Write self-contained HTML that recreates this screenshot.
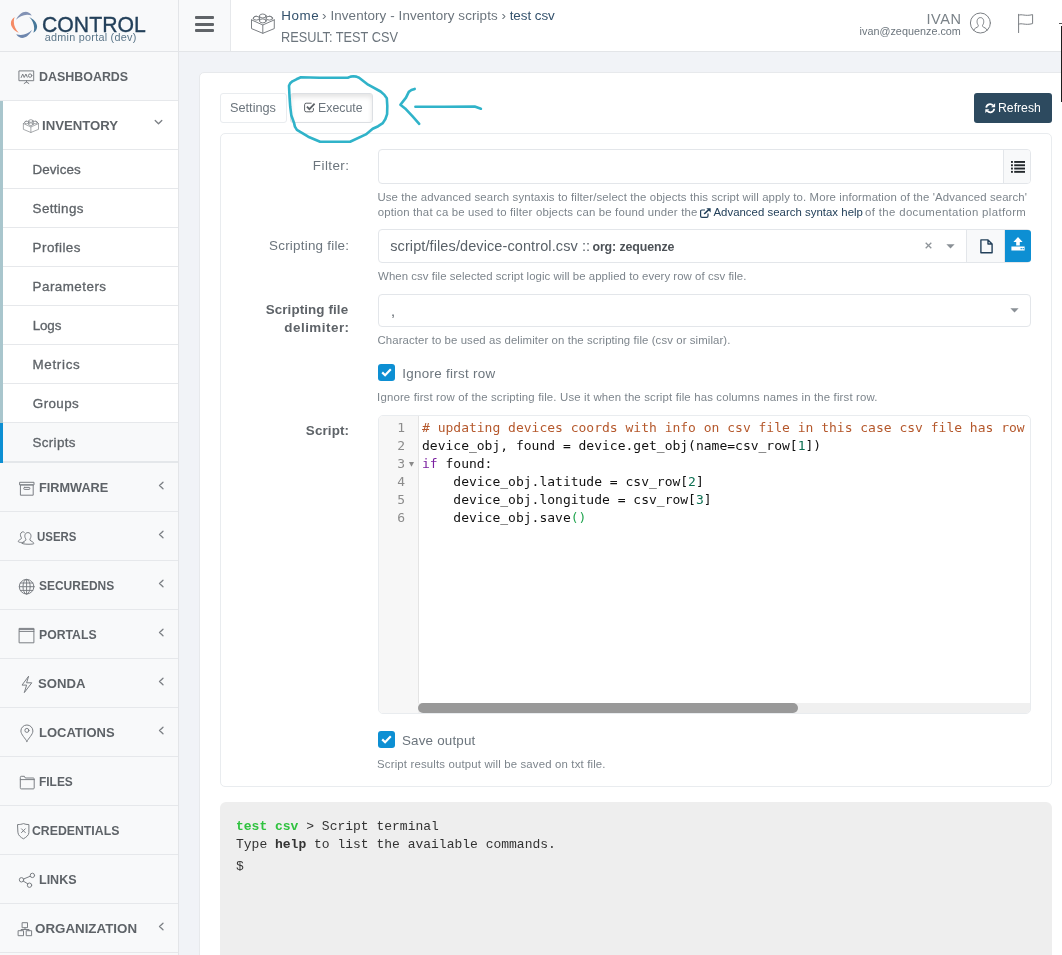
<!DOCTYPE html>
<html lang="en">
<head>
<meta charset="utf-8">
<title>Control - admin portal</title>
<style>
*{box-sizing:border-box;margin:0;padding:0}
html,body{width:1062px;height:955px;overflow:hidden;background:#f1f3f7;font-family:"Liberation Sans",sans-serif;color:#6c757d}
body{position:relative;will-change:transform}
a{text-decoration:none;color:inherit}
.t{position:absolute;white-space:pre;display:block}
/* sidebar */
#sidebar{position:absolute;left:0;top:0;width:179px;height:955px;background:#f8f9fa;border-right:1px solid #e3e5e8}
#brand{position:absolute;left:0;top:0;width:178px;height:52px;border-bottom:1px solid #e3e5e8}
#brand .name{left:42px;top:10.5px;font-size:22.8px;color:#23405a;line-height:26px;-webkit-text-stroke:.35px #23405a}
#brand .sub{left:45px;top:30.2px;font-size:10.8px;color:#5b7689;line-height:14px}
#brand svg{position:absolute;left:10px;top:11px}
.nav{position:absolute;left:0;top:52px;width:178px;list-style:none}
.nav li.top{height:49px;border-bottom:1px solid #e6e8eb;position:relative}
.nav li.top .t{top:16px;font-size:13.4px;font-weight:bold;color:#5e6368;line-height:18px}
.nav li svg{position:absolute;overflow:visible}
.nav li.open{background:#fff}
.nav li.open::before,.nav li.sub::before{content:"";position:absolute;left:0;top:0;bottom:-1px;width:3px;background:#a9c6cd}
.nav li.sub{height:39px;background:#fff;border-bottom:1px solid #e6e8eb;position:relative}
.nav li.sub .t{left:33px;top:11px;font-size:13.4px;color:#5e6368;line-height:18px;-webkit-text-stroke:.3px #5e6368}
.nav li.sub.active{background:#f8f9fa;border-bottom:2px solid #e4e7ea;height:40px}
.nav li.sub.active::before{background:#0d8fd3;bottom:-2px}
.ic{fill:none;stroke:#7b7f84;stroke-width:1;stroke-linejoin:round;stroke-linecap:round}
/* topbar */
#topbar{position:absolute;left:179px;top:0;width:883px;height:52px;background:#fff;border-bottom:1px solid #e3e5e8}
#burger{position:absolute;left:0;top:0;width:52px;height:51px;background:#f8f9fa;border-right:1px solid #e6e8eb}
#burger i{position:absolute;left:16px;width:19px;height:3px;background:#606468;border-radius:1px}
#topbar svg{position:absolute;overflow:visible}
.crumb{left:103px;top:7px;font-size:13.4px;line-height:18px;color:#6c757d}
a.crumb{color:#33516c}
#ptitle{left:103px;top:28px;font-size:14.5px;line-height:18px;color:#6c757d}
#uname{left:748px;top:11px;font-size:14.5px;line-height:16px;color:#7a8288}
#umail{left:681px;top:23.7px;font-size:10.8px;line-height:14px;color:#6c757d}
/* card */
#card{position:absolute;left:199px;top:72px;width:881px;height:900px;background:#fff;border:1px solid #e7e9ec;border-radius:5px}
#card>*{margin-top:-1px}
.tab{position:absolute;top:21px;height:30px;border:1px solid #e9ecef;border-radius:3px;font-size:13.4px;color:#6c757d;background:#fff}
.tab .t{top:5px;line-height:18px}
.tab svg{position:absolute}
#tabx{background:#fff;border-color:#dcdfe3;box-shadow:inset 0 3px 5px rgba(0,0,0,.11)}
#refresh{position:absolute;left:774px;top:21px;width:78px;height:30px;background:#2d4a5f;border-radius:3px;color:#fff;font-size:13.4px}
#refresh .t{top:5.6px;line-height:18px}
#refresh svg{position:absolute}
#panel{position:absolute;left:20px;top:61px;width:832px;height:654px;border:1px solid #e9ecef;border-radius:5px}
#panel>*{margin-left:-1px;margin-top:-1px}
.fl{font-size:13.4px;line-height:18px;color:#6c757d}
.fl.b{font-weight:bold;color:#5e6368}
.inp{position:absolute;left:158px;height:34px;border:1px solid #e3e6ea;border-radius:4px;background:#fff}
.inp svg{position:absolute;overflow:visible}
.help{left:158px;font-size:11.4px;line-height:15px;color:#7d858c}
a.help{color:#23405a}
.chk{position:absolute;left:158px;width:17px;height:17px;background:#0d8fd3;border-radius:3px}
.chk svg{position:absolute;left:3px;top:4px}
.cl{left:183px;font-size:13.4px;line-height:18px;color:#6c757d}
.seltxt{left:12px;top:7px;font-size:14.5px;line-height:18px;color:#596168}
b.seltxt{font-size:12.4px;color:#4d5257}
/* editor */
#editor{position:absolute;left:158px;top:282px;width:653px;height:299px;border:1px solid #e9ecef;border-radius:5px;overflow:hidden;background:#fff;font-family:"DejaVu Sans Mono","Liberation Mono",monospace;font-size:13px}
#gutter{position:absolute;left:0;top:0;width:40px;height:298px;background:#f7f7f7;border-right:1px solid #e4e4e4;color:#8c8c8c}
#gutter div{position:absolute;left:0;width:26px;text-align:right;line-height:18px;height:18px}
#code{position:absolute;left:43px;top:3px;white-space:pre;line-height:18px;color:#111}
#code .c{color:#b5582c}
#code .k{color:#7a1fa0}
#code .n{color:#0a6e50}
#code .p{color:#22a550}
#hscroll{position:absolute;left:39px;top:287px;width:613px;height:10px;background:#f0f0f0}
#hscroll i{position:absolute;left:0;top:0;width:380px;height:10px;background:#999;border-radius:5px}
/* terminal */
#term{position:absolute;left:20px;top:730px;width:832px;height:200px;background:#eeeeee;border-radius:6px;font-family:"Liberation Mono",monospace;font-size:13px;color:#333}
#term .t{left:16px;line-height:16px}
#term .g{color:#2fc23f;font-weight:bold}
#term b{color:#333}
/* annotations */
#anno{position:absolute;left:0;top:0;width:1062px;height:955px;pointer-events:none}
#bn{letter-spacing:0.000px;margin-left:-0.24px;transform:scaleX(0.9310);transform-origin:0 50%}
#bs{letter-spacing:0.267px;margin-left:-0.27px}
#n1{letter-spacing:0.000px;margin-left:-0.16px;transform:scaleX(0.9288);transform-origin:0 50%}
#n2{letter-spacing:0.000px;margin-left:0.13px;transform:scaleX(0.9842);transform-origin:0 50%}
#n3{letter-spacing:0.000px;margin-left:-0.04px;transform:scaleX(0.9507);transform-origin:0 50%}
#n4{letter-spacing:0.000px;margin-left:-0.10px;transform:scaleX(0.8544);transform-origin:0 50%}
#n5{letter-spacing:0.000px;margin-left:-0.19px;transform:scaleX(0.8940);transform-origin:0 50%}
#n6{letter-spacing:0.000px;margin-left:-0.12px;transform:scaleX(0.9140);transform-origin:0 50%}
#n7{letter-spacing:0.000px;margin-left:-0.64px;transform:scaleX(0.9811);transform-origin:0 50%}
#n8{letter-spacing:0.000px;margin-left:-0.29px;transform:scaleX(0.9705);transform-origin:0 50%}
#n9{letter-spacing:0.000px;margin-left:0.19px;transform:scaleX(0.8909);transform-origin:0 50%}
#n10{letter-spacing:0.000px;margin-left:-0.85px;transform:scaleX(0.9172);transform-origin:0 50%}
#n11{letter-spacing:0.000px;margin-left:0.49px;transform:scaleX(0.9343);transform-origin:0 50%}
#n12{letter-spacing:0.000px;margin-left:0.14px;transform:scaleX(0.9963);transform-origin:0 50%}
#s1{letter-spacing:0.061px;margin-left:-0.40px}
#s2{letter-spacing:0.342px;margin-left:-0.40px}
#s3{letter-spacing:0.467px;margin-left:-0.45px}
#s4{letter-spacing:0.468px;margin-left:-0.42px}
#s5{letter-spacing:-0.091px;margin-left:-0.37px}
#s6{letter-spacing:0.670px;margin-left:-0.48px}
#s7{letter-spacing:0.389px;margin-left:-0.16px}
#s8{letter-spacing:0.332px;margin-left:-0.48px}
#ptitle{letter-spacing:0.000px;margin-left:-0.83px;transform:scaleX(0.8796);transform-origin:0 50%}
#uname{letter-spacing:0.602px;margin-left:-0.60px}
#umail{letter-spacing:0.015px;margin-left:-0.40px}
#tb1{letter-spacing:0.000px;margin-left:-0.58px;transform:scaleX(0.9503);transform-origin:0 50%}
#tb2{letter-spacing:0.000px;margin-left:-1.23px;transform:scaleX(0.9207);transform-origin:0 50%}
#rf{letter-spacing:0.000px;margin-left:0.44px;transform:scaleX(0.9134);transform-origin:0 50%}
#l1{letter-spacing:0.449px;margin-left:-2.18px}
#l2{letter-spacing:0.236px;margin-left:-1.94px}
#l3{letter-spacing:0.103px;margin-left:-1.34px}
#l4{letter-spacing:0.498px;margin-left:-1.69px}
#l5{letter-spacing:0.121px;margin-left:-1.16px}
#h1{letter-spacing:0.118px;margin-left:-1.59px}
#h3{letter-spacing:0.056px;margin-left:-0.93px}
#h4{letter-spacing:0.091px;margin-left:-1.46px}
#h5{letter-spacing:0.157px;margin-left:-1.92px}
#h6{letter-spacing:0.159px;margin-left:-1.92px}
#c1{letter-spacing:0.295px;margin-left:-1.71px}
#c2{letter-spacing:0.182px;margin-left:-2.00px}
#crumb{letter-spacing:0.542px;margin-left:-0.71px}
#cr2{letter-spacing:0.098px;margin-left:-0.95px}
#cr3{letter-spacing:-0.042px;margin-left:-0.32px}
#h2{letter-spacing:0.172px;margin-left:-1.39px}
#h2b{letter-spacing:0.024px;margin-left:-1.55px}
#h2c{letter-spacing:0.359px;margin-left:-1.98px}
#sv1{letter-spacing:0.099px;margin-left:-0.78px}
#sv2{letter-spacing:-0.116px;margin-left:-0.55px}
</style>
</head>
<body>
<div id="sidebar">
  <div id="brand">
    <svg width="28" height="28" viewBox="0 0 28 28" opacity=".88"><g transform="translate(14 13.9)"><g fill="#7486ac"><path d="M-7.9 -5.2 C-4.5 -12.5 3 -16.5 7.8 -9.4 C1.5 -11.5 -4 -9 -7.9 -5.2 Z"/></g><g fill="#2f678d" transform="rotate(90)"><path d="M-7.9 -5.2 C-4.5 -12.5 3 -16.5 7.8 -9.4 C1.5 -11.5 -4 -9 -7.9 -5.2 Z"/></g><g fill="#5b78a4" transform="rotate(180)"><path d="M-7.9 -5.2 C-4.5 -12.5 3 -16.5 7.8 -9.4 C1.5 -11.5 -4 -9 -7.9 -5.2 Z"/></g><g fill="#f57c51" transform="rotate(270)"><path d="M-7.9 -5.2 C-4.5 -12.5 3 -16.5 7.8 -9.4 C1.5 -11.5 -4 -9 -7.9 -5.2 Z"/></g></g></svg>
    <span class="t name" id="bn">CONTROL</span>
    <span class="t sub" id="bs">admin portal (dev)</span>
  </div>
  <ul class="nav">
    <li class="top"><svg class="ic" style="left:18px;top:18px" width="17" height="15" viewBox="0 0 17 15" ><rect x="1.3" y="0.9" width="14.4" height="9.8"/><path d="M3.2 7.5 L4.7 4 L6.2 7.5 L7.9 4 L9.3 7.2"/><circle cx="12.1" cy="5.6" r="1.7"/><path d="M8.5 10.7 V12 M6.2 13.5 L8.5 12 L10.8 13.5"/></svg><span class="t" id="n1" style="left:39px">DASHBOARDS</span></li>
    <li class="top open"><svg class="ic" style="left:22.8px;top:18.2px" width="15.9" height="13.8" viewBox="0 0 23.8 20.8" stroke-width="1.4"><path d="M0.5 6.9 L11.8 12 L23.3 6.9 M0.5 6.9 V15.6 L11.8 20.3 L23.3 15.6 V6.9 M11.8 12 V20.3"/><path d="M2.2 6 C2.5 3.6 4 3.2 5.4 3.2 M21.6 6 C21.3 3.6 19.8 3.2 18.4 3.2"/><ellipse cx="11.8" cy="3" rx="3.3" ry="2"/><path d="M8.5 3 V5 M15.1 3 V5"/><ellipse cx="5.4" cy="5.2" rx="3.2" ry="1.9"/><ellipse cx="18.4" cy="5.2" rx="3.2" ry="1.9"/><ellipse cx="11.8" cy="7.9" rx="3.3" ry="2"/><path d="M8.5 6 V7.9 M15.1 6 V7.9"/></svg><span class="t" id="n2" style="left:42px">INVENTORY</span><svg class="ic" style="left:154px;top:18px;stroke-width:1.3" width="9" height="7" viewBox="0 0 9 7"><path d="M1.2 1.5 L4.5 4.8 L7.8 1.5"/></svg></li>
    <li class="sub"><span class="t" id="s1">Devices</span></li>
    <li class="sub"><span class="t" id="s2">Settings</span></li>
    <li class="sub"><span class="t" id="s3">Profiles</span></li>
    <li class="sub"><span class="t" id="s4">Parameters</span></li>
    <li class="sub"><span class="t" id="s5">Logs</span></li>
    <li class="sub"><span class="t" id="s6">Metrics</span></li>
    <li class="sub"><span class="t" id="s7">Groups</span></li>
    <li class="sub active"><span class="t" id="s8">Scripts</span></li>
    <li class="top"><svg class="ic" style="left:19px;top:18px" width="16" height="15" viewBox="0 0 16 15" ><rect x="1" y="1.3" width="14" height="2.6"/><rect x="1.8" y="3.9" width="12.4" height="10.3"/><rect x="4.8" y="6.4" width="6" height="2" rx="0.6"/></svg><span class="t" id="n3" style="left:39px">FIRMWARE</span><svg class="ic" style="left:158px;top:18px;stroke-width:1.3" width="7" height="9" viewBox="0 0 7 9"><path d="M5 1.2 L1.5 4.5 L5 7.8"/></svg></li>
    <li class="top"><svg class="ic" style="left:17px;top:18px" width="18" height="15" viewBox="0 0 18 15" ><path d="M7.2 12.3 C5.5 12.6 1.3 12.6 1.3 11.5 C1.3 10 3.4 9.6 4.3 8.7 C4.6 8.2 4.4 7.6 4 7 C3.2 5.8 3 3 5 2 C6 1.6 6.9 1.9 7.4 2.5"/><path d="M5.2 13.6 C5.2 11.8 7.8 11.3 8.8 10.2 C9.1 9.6 8.9 8.9 8.4 8.2 C7.4 6.8 7.4 2.6 10.9 2.6 C14.4 2.6 14.4 6.8 13.4 8.2 C12.9 8.9 12.7 9.6 13 10.2 C14 11.3 16.8 11.8 16.8 13.6 C16.8 14.5 5.2 14.5 5.2 13.6 Z"/></svg><span class="t" id="n4" style="left:37px">USERS</span><svg class="ic" style="left:158px;top:18px;stroke-width:1.3" width="7" height="9" viewBox="0 0 7 9"><path d="M5 1.2 L1.5 4.5 L5 7.8"/></svg></li>
    <li class="top"><svg class="ic" style="left:18px;top:17px" width="17" height="17" viewBox="0 0 17 17" ><circle cx="8.6" cy="8.7" r="7.3"/><ellipse cx="8.6" cy="8.7" rx="3.6" ry="7.3"/><path d="M8.6 1.4 V16 M1.3 8.7 H15.9 M2.3 5 H14.9 M2.3 12.4 H14.9"/></svg><span class="t" id="n5" style="left:39px">SECUREDNS</span><svg class="ic" style="left:158px;top:18px;stroke-width:1.3" width="7" height="9" viewBox="0 0 7 9"><path d="M5 1.2 L1.5 4.5 L5 7.8"/></svg></li>
    <li class="top"><svg class="ic" style="left:18px;top:17px" width="17" height="17" viewBox="0 0 17 17" ><rect x="1.5" y="1.4" width="14.4" height="14.4"/><path d="M1.5 2.4 H15.9 M1.5 4.4 H15.9"/></svg><span class="t" id="n6" style="left:39px">PORTALS</span><svg class="ic" style="left:158px;top:18px;stroke-width:1.3" width="7" height="9" viewBox="0 0 7 9"><path d="M5 1.2 L1.5 4.5 L5 7.8"/></svg></li>
    <li class="top"><svg class="ic" style="left:20px;top:16px" width="14" height="19" viewBox="0 0 14 19" ><path d="M8.4 1.5 L2 10.1 H6.6 L4.3 17.6 L11.8 7.8 H7 Z"/></svg><span class="t" id="n7" style="left:39px">SONDA</span><svg class="ic" style="left:158px;top:18px;stroke-width:1.3" width="7" height="9" viewBox="0 0 7 9"><path d="M5 1.2 L1.5 4.5 L5 7.8"/></svg></li>
    <li class="top"><svg class="ic" style="left:19px;top:15px" width="16" height="20" viewBox="0 0 16 20" ><path d="M7.9 18.4 C6.5 15.5 1.9 11.5 1.9 8 A6 6 0 0 1 13.9 8 C13.9 11.5 9.3 15.5 7.9 18.4 Z"/><circle cx="7.9" cy="7.4" r="2"/></svg><span class="t" id="n8" style="left:39px">LOCATIONS</span><svg class="ic" style="left:158px;top:18px;stroke-width:1.3" width="7" height="9" viewBox="0 0 7 9"><path d="M5 1.2 L1.5 4.5 L5 7.8"/></svg></li>
    <li class="top"><svg class="ic" style="left:19px;top:18px" width="16" height="15" viewBox="0 0 16 15" ><path d="M1.3 2.2 C1.3 1.6 1.6 1.3 2.2 1.3 H5.4 L6.3 3 H14.3 C14.9 3 15.2 3.3 15.2 3.9 V13 C15.2 13.6 14.9 13.9 14.3 13.9 H2.2 C1.6 13.9 1.3 13.6 1.3 13 Z M1.3 4.6 H15.2"/></svg><span class="t" id="n9" style="left:39px">FILES</span></li>
    <li class="top"><svg class="ic" style="left:16px;top:16px" width="15" height="18" viewBox="0 0 15 18" ><path d="M1.9 2.6 C4 2.6 5.8 2.2 7.4 1.6 C9 2.2 10.8 2.6 12.9 2.6 V10.6 C12.9 13.2 10 15.4 7.4 16.8 C4.8 15.4 1.9 13.2 1.9 10.6 Z"/><path d="M5.5 6.8 L9.3 10.6 M9.3 6.8 L5.5 10.6"/></svg><span class="t" id="n10" style="left:33px">CREDENTIALS</span></li>
    <li class="top"><svg class="ic" style="left:17px;top:16px" width="19" height="18" viewBox="0 0 19 18" ><circle cx="4.5" cy="8.8" r="2.2"/><circle cx="15.4" cy="4.4" r="2.2"/><circle cx="12.5" cy="14.2" r="2.2"/><path d="M6.6 8 L13.3 5.2 M6.3 10.1 L10.8 12.8"/></svg><span class="t" id="n11" style="left:39px">LINKS</span></li>
    <li class="top"><svg class="ic" style="left:17px;top:17px" width="16" height="16" viewBox="0 0 16 16" ><rect x="5.5" y="1.7" width="5" height="5"/><rect x="1.5" y="9.7" width="5" height="5"/><rect x="9.6" y="9.7" width="5" height="5"/><path d="M8 6.7 V8.5 M4 9.7 V8.5 H12.1 V9.7"/></svg><span class="t" id="n12" style="left:35px">ORGANIZATION</span><svg class="ic" style="left:158px;top:18px;stroke-width:1.3" width="7" height="9" viewBox="0 0 7 9"><path d="M5 1.2 L1.5 4.5 L5 7.8"/></svg></li>
  </ul>
</div>

<div id="topbar">
  <div id="burger"><i style="top:16px"></i><i style="top:22.5px"></i><i style="top:29px"></i></div>
  <svg class="ic" style="left:71.6px;top:12.6px" width="23.8" height="20.8" viewBox="0 0 23.8 20.8" stroke="#6c757d"><path d="M0.5 6.9 L11.8 12 L23.3 6.9 M0.5 6.9 V15.6 L11.8 20.3 L23.3 15.6 V6.9 M11.8 12 V20.3"/><path d="M2.2 6 C2.5 3.6 4 3.2 5.4 3.2 M21.6 6 C21.3 3.6 19.8 3.2 18.4 3.2"/><ellipse cx="11.8" cy="3" rx="3.3" ry="2"/><path d="M8.5 3 V5 M15.1 3 V5"/><ellipse cx="5.4" cy="5.2" rx="3.2" ry="1.9"/><ellipse cx="18.4" cy="5.2" rx="3.2" ry="1.9"/><ellipse cx="11.8" cy="7.9" rx="3.3" ry="2"/><path d="M8.5 6 V7.9 M15.1 6 V7.9"/></svg>
  <a class="t crumb" id="crumb">Home</a><span class="t crumb" id="cr2" style="left:144px">› Inventory - Inventory scripts ›</span><a class="t crumb" id="cr3" style="left:331px">test csv</a>
  <span class="t" id="ptitle">RESULT: TEST CSV</span>
  <span class="t" id="uname">IVAN</span>
  <span class="t" id="umail">ivan@zequenze.com</span>
  <svg class="ic" style="left:790px;top:12px" width="22" height="22" viewBox="0 0 22 22" stroke="#9a9fa4" stroke-width="0.9"><circle cx="11.4" cy="11" r="10"/><path d="M4.6 18.3 C5 16 8.3 15.6 9.2 14.4 C9.5 13.7 9.3 13.2 8.8 12.5 C7.6 10.8 7.5 5.6 11.4 5.6 C15.3 5.6 15.2 10.8 14 12.5 C13.5 13.2 13.3 13.7 13.6 14.4 C14.5 15.6 17.8 16 18.2 18.3"/></svg>
  <svg class="ic" style="left:838px;top:13px" width="18" height="21" viewBox="0 0 18 21" stroke="#8e9499"><path d="M1.6 1.3 V19.6 M1.6 2.2 C5 0.6 8 3.6 15.6 1.6 V10.6 C8 12.6 5 9.6 1.6 11.2"/></svg>
</div>

<div id="card">
  <div class="tab" style="left:20px;width:67px"><span class="t" id="tb1" style="left:10px">Settings</span></div>
  <div class="tab" id="tabx" style="left:90px;width:83px"><svg style="left:13px;top:8px;overflow:visible" width="12" height="11" viewBox="0 0 12 11" fill="none" stroke="#5d6267"><path d="M9.4 6.2 V8.2 A1.6 1.6 0 0 1 7.8 9.8 H2.2 A1.6 1.6 0 0 1 0.6 8.2 V2.8 A1.6 1.6 0 0 1 2.2 1.2 H7.6" stroke-width="1"/><path d="M2.9 4.6 L5.4 7.1 L10.6 1.7" stroke-width="1.8"/></svg><span class="t" id="tb2" style="left:28px">Execute</span></div>
  <div id="refresh"><svg style="left:10.8px;top:9.8px;overflow:visible" width="10.4" height="10.4" viewBox="0 0 11 11" fill="none" stroke="#fff" stroke-width="1.9"><path d="M1.3 4.9 A4.1 4.1 0 0 1 8.5 2.6"/><path d="M10.7 0.3 V4.5 H6.5 Z" fill="#fff" stroke="none"/><path d="M9.7 6.1 A4.1 4.1 0 0 1 2.5 8.4"/><path d="M0.3 10.7 V6.5 H4.5 Z" fill="#fff" stroke="none"/></svg><span class="t" id="rf" style="left:24px">Refresh</span></div>

  <div id="panel">
    <span class="t fl" id="l1" style="left:94px;top:24px">Filter:</span>
    <div class="inp" style="top:16px;width:653px;height:35px"><div style="position:absolute;right:0;top:0;width:27px;height:33px;background:#f8f9fa;border-left:1px solid #e3e6ea;border-radius:0 3px 3px 0"><svg style="left:6.5px;top:10.6px" width="14" height="12" viewBox="0 0 14 12" fill="#23282c"><rect x="0" y="0" width="1.9" height="1.9"/><rect x="3.2" y="0" width="10.8" height="1.9"/><rect x="0" y="3.3" width="1.9" height="1.9"/><rect x="3.2" y="3.3" width="10.8" height="1.9"/><rect x="0" y="6.6" width="1.9" height="1.9"/><rect x="3.2" y="6.6" width="10.8" height="1.9"/><rect x="0" y="9.9" width="1.9" height="1.9"/><rect x="3.2" y="9.9" width="10.8" height="1.9"/></svg></div></div>
    <span class="t help" id="h1" style="top:56.5px">Use the advanced search syntaxis to filter/select the objects this script will apply to. More information of the 'Advanced search'</span>
    <span class="t help" id="h2" style="top:71.5px">option that ca be used to filter objects can be found under the</span><svg style="position:absolute;left:479.8px;top:74.5px;overflow:visible" width="11" height="10" viewBox="0 0 11 10" fill="none" stroke="#23405a" stroke-width="1.2"><path d="M8 5.6 V8 A1.3 1.3 0 0 1 6.7 9.3 H1.9 A1.3 1.3 0 0 1 0.6 8 V3.3 A1.3 1.3 0 0 1 1.9 2 H5"/><path d="M4.2 6 L9.6 0.9" stroke-width="1.6"/><path d="M6.4 0.3 H10.7 V4.6 Z" fill="#23405a" stroke="none"/></svg><a class="t help" id="h2b" style="top:71.5px;left:494px">Advanced search syntax help</a><span class="t help" id="h2c" style="top:71.5px;left:646px">of the documentation platform</span>

    <span class="t fl" id="l2" style="left:50px;top:104px">Scripting file:</span>
    <div class="inp" style="top:96px;width:653px;height:34px"><span class="t seltxt" id="sv1">script/files/device-control.csv ::</span><b class="t seltxt" id="sv2" style="left:214px;top:8px">org: zequenze</b><svg style="left:546.4px;top:12.4px" width="7" height="7" viewBox="0 0 7 7" fill="none" stroke="#8e9499" stroke-width="1.3"><path d="M0.7 0.7 L6.3 6.3 M6.3 0.7 L0.7 6.3"/></svg><svg style="left:567px;top:14px" width="9" height="5" viewBox="0 0 9 5" fill="#8a9096"><path d="M0.4 0.3 H8.6 L4.5 4.4 Z"/></svg><div style="position:absolute;right:25px;top:-1px;width:39px;height:34px;background:#f8f9fa;border:1px solid #e3e6ea"><svg style="left:12.6px;top:9px" width="13" height="15" viewBox="0 0 13 15" fill="none" stroke="#23405a" stroke-width="1.4" stroke-linejoin="round"><path d="M0.9 0.9 H8 L12.1 5 V13.7 H0.9 Z M8 0.9 V5 H12.1"/></svg></div><div style="position:absolute;right:-1px;top:0;width:26.4px;height:32px;background:#0d8fd3;border-radius:0 3px 3px 0"><svg style="left:6px;top:7px" width="14" height="14" viewBox="0 0 14 14" fill="#fff"><path d="M7 0 L11.6 4.9 H8.8 V8.6 H5.2 V4.9 H2.4 Z"/><path d="M0.4 9.6 H13.6 V13.4 H0.4 Z M9.6 11 V12.2 H10.8 V11 Z M11.6 11 V12.2 H12.8 V11 Z" fill-rule="evenodd"/></svg></div></div>
    <span class="t help" id="h3" style="top:135.6px">When csv file selected script logic will be applied to every row of csv file.</span>

    <span class="t fl b" id="l3" style="left:46px;top:168px">Scripting file</span>
    <span class="t fl b" id="l4" style="left:65px;top:186px">delimiter:</span>
    <div class="inp" style="top:161px;width:653px;height:33px"><span class="t seltxt" style="left:12px;top:7px">,</span><svg style="left:631.4px;top:13px" width="9" height="5" viewBox="0 0 9 5" fill="#8a9096"><path d="M0.4 0.3 H8.6 L4.5 4.4 Z"/></svg></div>
    <span class="t help" id="h4" style="top:199.7px">Character to be used as delimiter on the scripting file (csv or similar).</span>

    <div class="chk" style="top:231px"><svg width="11" height="9" viewBox="0 0 11 9" fill="none" stroke="#fff" stroke-width="2.2" stroke-linecap="butt" stroke-linejoin="miter"><path d="M1.2 4.4 L4.1 7.2 L9.8 1.3"/></svg></div>
    <span class="t cl" id="c1" style="top:232px">Ignore first row</span>
    <span class="t help" id="h5" style="top:256.5px">Ignore first row of the scripting file. Use it when the script file has columns names in the first row.</span>

    <span class="t fl b" id="l5" style="left:86px;top:289px">Script:</span>
    <div id="editor">
      <div id="gutter"><div style="top:3px">1</div><div style="top:21px">2</div><div style="top:39px">3</div><svg style="position:absolute;left:30.4px;top:46.4px" width="5" height="5" viewBox="0 0 5 5" fill="#8a8a8a"><path d="M0 0 H5 L2.5 4.8 Z"/></svg><div style="top:57px">4</div><div style="top:75px">5</div><div style="top:93px">6</div></div>
<div id="code"><span class="c"># updating devices coords with info on csv file in this case csv file has row</span>
device_obj, found = device.get_obj(name=csv_row[<span class="n">1</span>])
<span class="k">if</span> found:
    device_obj.latitude = csv_row[<span class="n">2</span>]
    device_obj.longitude = csv_row[<span class="n">3</span>]
    device_obj.save<span class="p">()</span></div>
      <div id="hscroll"><i></i></div>
    </div>

    <div class="chk" style="top:598px"><svg width="11" height="9" viewBox="0 0 11 9" fill="none" stroke="#fff" stroke-width="2.2" stroke-linecap="butt" stroke-linejoin="miter"><path d="M1.2 4.4 L4.1 7.2 L9.8 1.3"/></svg></div>
    <span class="t cl" id="c2" style="top:599px">Save output</span>
    <span class="t help" id="h6" style="top:623.6px">Script results output will be saved on txt file.</span>
  </div>

  <div id="term"><span class="t" style="top:17px"><span class="g">test csv</span> &gt; Script terminal</span><span class="t" style="top:35px">Type <b>help</b> to list the available commands.</span><span class="t" style="top:57px">$</span></div>
</div>
<svg id="anno" viewBox="0 0 1062 955" fill="none" stroke="#30b3c9" stroke-width="2.6" stroke-linecap="round" stroke-linejoin="round"><path d="M289 85.8 L290.2 83.2 L292.4 81.3 L296.4 79.3 L300.9 77.3 L319.5 77.7 L347.8 77.7 L350.6 76.6 L353.4 76.2 L356.4 76.6 L359.1 77.7 L368.1 84.7 L380.6 91.5 L384.4 94.9 L386.8 98.2 L387.3 106 L387.1 114.1 L385.4 119 L382.8 123.1 L378.2 126.2 L372.7 128.8 L365.9 134.4 L350.1 141.8 L320.1 141.8 L308.2 136.7 L296.9 129.9 L294.9 126.6 L294.1 123.1 L291.3 115.2 L290.2 106.5 L289.6 98.2 Z"/><path d="M414.7 88.9 L411.4 90 L408.8 91.9 L406 97.6 L400.4 104.7 L405.1 108.4 L412.6 116.4 L419.2 123.8"/><path d="M415.4 106.8 L445 106.7 L474.7 106.5 L480.9 108.7"/></svg>
<div style="position:absolute;left:1061px;top:26px;width:1px;height:76px;background:#1e1e1e"></div><div style="position:absolute;left:1059px;top:23px;width:3px;height:1px;background:#555"></div>
</body>
</html>
